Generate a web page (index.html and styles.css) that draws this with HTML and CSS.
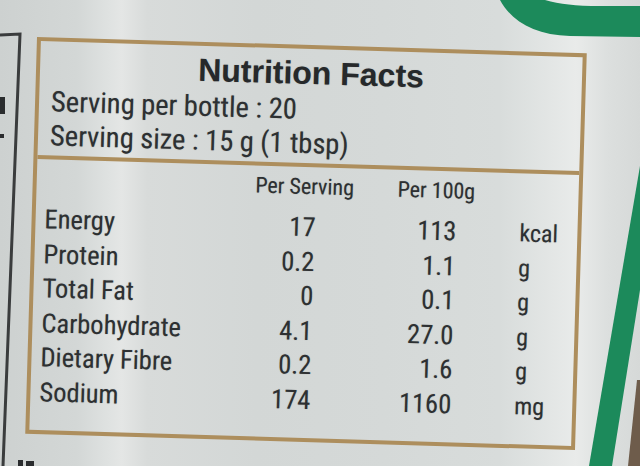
FILE: index.html
```html
<!DOCTYPE html>
<html lang="en">
<head>
<meta charset="utf-8">
<title>Nutrition Facts</title>
<link rel="stylesheet" href="styles.css">
</head>
<body>
<div class="scene">
  <svg class="backdrop" width="640" height="466" viewBox="0 0 640 466" aria-hidden="true">
    <path class="green" d="M500 0 L545 0 C560 4 575 6 600 6 L640 6 L640 37 L570 36 C535 35 512 22 500 0 Z"/>
    <polygon class="green" points="640,166 589,466 612,466 640,290"/>
    <polygon class="brown" points="637,380 640,380 640,466 628,466"/>
    <polyline class="frame" points="0,35 20,34 3,466"/>
    <rect class="ink" x="0" y="97" width="5" height="17"/>
    <rect class="ink" x="0" y="134" width="4" height="4"/>
    <rect class="ink" x="18" y="460" width="5" height="6"/>
    <rect class="ink" x="26" y="461" width="8" height="5"/>
  </svg>

  <div class="label">
    <div class="head">
      <h1 class="title">Nutrition Facts</h1>
      <p class="line">Serving per bottle : 20</p>
      <p class="line">Serving size : 15 g (1 tbsp)</p>
    </div>
    <div class="facts">
      <div class="hdr"></div>
      <div class="hdr">Per Serving</div>
      <div class="hdr hdr-100">Per 100g</div>
      <div class="hdr"></div>

      <div class="name">Energy</div><div class="v1">17</div><div class="v2">113</div><div class="unit">kcal</div>
      <div class="name">Protein</div><div class="v1">0.2</div><div class="v2">1.1</div><div class="unit">g</div>
      <div class="name">Total Fat</div><div class="v1">0</div><div class="v2">0.1</div><div class="unit">g</div>
      <div class="name">Carbohydrate</div><div class="v1">4.1</div><div class="v2">27.0</div><div class="unit">g</div>
      <div class="name">Dietary Fibre</div><div class="v1">0.2</div><div class="v2">1.6</div><div class="unit">g</div>
      <div class="name">Sodium</div><div class="v1">174</div><div class="v2">1160</div><div class="unit">mg</div>
    </div>
  </div>
</div>
</body>
</html>
```

FILE: styles.css
```css
* { box-sizing: border-box; }

html, body {
  margin: 0;
  padding: 0;
  width: 640px;
  height: 466px;
  overflow: hidden;
}

body {
  background:
    linear-gradient(90deg,
      #cdd1d0 0%,
      #d3d7d6 12%,
      #dfe2e1 17%,
      #e4e6e5 19%,
      #d8dbda 23%,
      #d3d7d6 40%,
      #d5d9d8 60%,
      #d8dcdb 78%,
      #e3e6e5 86%,
      #e9ebea 90%,
      #dcdfde 95%,
      #d6d9d8 100%);
  color: #2d3032;
  font-family: "Roboto Condensed", "Roboto", "Liberation Sans", sans-serif;
  font-stretch: condensed;
}

.scene {
  position: relative;
  width: 640px;
  height: 466px;
  padding: 45px 0 0 31px;
}

.backdrop {
  position: absolute;
  left: 0;
  top: 0;
}

.green { fill: #1c8a5b; }
.brown { fill: #6e5c4b; }
.frame { fill: none; stroke: #3a3c3d; stroke-width: 3; }
.ink { fill: #2a2c2e; }

.label {
  width: 550px;
  height: 397px;
  border: 4px solid #ad8e5d;
  display: flex;
  flex-direction: column;
  transform: rotate(1.7deg);
  text-shadow: 0 0 1px rgba(40, 42, 44, 0.35);
}

.head {
  padding: 6px 0 2px 12px;
  border-bottom: 4px solid #ad8e5d;
}

.title {
  margin: 0 0 2px -12px;
  font-family: "Liberation Sans", Arial, sans-serif;
  font-stretch: normal;
  font-weight: bold;
  font-size: 32px;
  line-height: 36px;
  text-align: center;
  color: #26292b;
}

.line {
  margin: 0;
  font-size: 28.5px;
  line-height: 34px;
  white-space: nowrap;
}

.facts {
  padding: 6px 0 0 9px;
  display: grid;
  grid-template-columns: 166px 100px 78px 1fr;
  grid-template-rows: 37px repeat(6, 34.5px);
  column-gap: 43px;
  white-space: nowrap;
}

.hdr {
  font-size: 22px;
  line-height: 28px;
  text-align: center;
}

.hdr-100 { padding-right: 10px; }

.name {
  font-size: 26.5px;
  line-height: 34.5px;
}

.v1, .v2 {
  font-size: 26.5px;
  line-height: 34.5px;
  text-align: right;
}

.v1 { padding-right: 38px; }
.v2 { padding-right: 18px; }

.unit {
  font-size: 24px;
  line-height: 34.5px;
  padding-left: 2px;
}
```
